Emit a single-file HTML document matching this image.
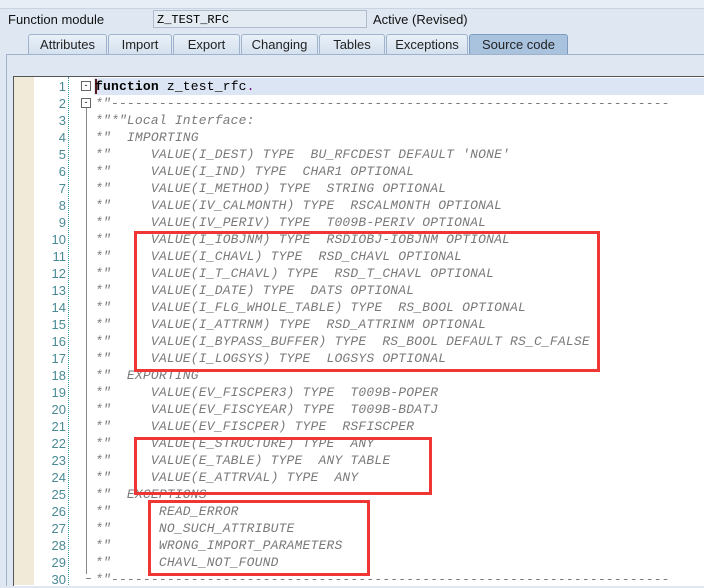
<!DOCTYPE html>
<html><head><style>
body{margin:0;width:704px;height:585px;overflow:hidden;background:#dfe8f2;font-family:"Liberation Sans",sans-serif;position:relative}
.a{position:absolute}
.tab{position:absolute;top:34px;height:20px;background:linear-gradient(#e9f0f8,#d3e0ee);border:1px solid #9fb4cc;border-bottom:none;font-size:13px;line-height:20px;text-align:center;color:#222;border-radius:3px 3px 0 0}
.code{position:absolute;left:95px;font-family:"Liberation Mono",monospace;font-size:13px;letter-spacing:0.18px;white-space:pre;color:#7a7a7a;font-style:italic;line-height:17px}
.num{position:absolute;left:34px;width:32px;text-align:right;font-family:"Liberation Sans",sans-serif;font-size:13px;color:#4a8a95;line-height:17px}
.box{position:absolute;border:3px solid #f03535}
</style></head><body>
<div class="a" style="left:0;top:0;width:704px;height:8px;background:#e8eef6;border-bottom:1px solid #c8d4e2"></div>
<div class="a" style="left:8px;top:12px;font-size:13px;color:#111">Function module</div>
<div class="a" style="left:153px;top:10px;width:214px;height:18px;background:#e4ebf2;border:1px solid #b0bccb;font-family:'Liberation Mono',monospace;font-size:12px;line-height:18px;padding-left:3px;box-sizing:border-box">Z_TEST_RFC</div>
<div class="a" style="left:373px;top:12px;font-size:13px;color:#111">Active (Revised)</div>
<div class="tab" style="left:28px;width:77px">Attributes</div>
<div class="tab" style="left:108px;width:62px">Import</div>
<div class="tab" style="left:173px;width:65px">Export</div>
<div class="tab" style="left:241px;width:75px">Changing</div>
<div class="tab" style="left:319px;width:64px">Tables</div>
<div class="tab" style="left:386px;width:80px">Exceptions</div>
<div class="tab" style="left:469px;width:97px;background:#a9c3df;border-color:#7f9cbf">Source code</div>
<div class="a" style="left:6px;top:54px;width:698px;height:531px;background:#dfe8f2;border-left:1px solid #9fb4cc;border-top:1px solid #9fb4cc"></div>
<div class="a" style="left:13px;top:76px;width:691px;height:509px;background:#fff;border-left:1px solid #555;border-top:1px solid #555"></div>
<div class="a" style="left:14px;top:77px;width:20px;height:508px;background:#f1ead8"></div>
<div class="a" style="left:68px;top:77px;height:508px;border-left:1px dotted #3a9aa0"></div>
<div class="a" style="left:94px;top:78px;width:610px;height:17px;background:#dbe5f3"></div>
<div class="a" style="left:95px;top:79px;width:2px;height:15px;background:#5a1a1a"></div>
<div class="a" style="left:86px;top:104px;height:470px;border-left:1px solid #888"></div>
<div class="a" style="left:81px;top:81px;width:8px;height:8px;border:1px solid #666;background:#fff;font-size:9px;line-height:7px;text-align:center">-</div>
<div class="a" style="left:81px;top:98px;width:8px;height:8px;border:1px solid #666;background:#fff;font-size:9px;line-height:7px;text-align:center">-</div>
<div class="a" style="left:86px;top:578px;width:5px;border-top:1px solid #888"></div>
<div id="n"></div><div id="c"></div>
<div class="box" style="left:134px;top:231px;width:460px;height:135px"></div>
<div class="box" style="left:134px;top:437px;width:292px;height:52px"></div>
<div class="box" style="left:148px;top:500px;width:216px;height:70px"></div>
<script>
var L=['function z_test_rfc.','*"'+'-'.repeat(70),'*"*"Local Interface:','*"  IMPORTING',
'*"     VALUE(I_DEST) TYPE  BU_RFCDEST DEFAULT \'NONE\'','*"     VALUE(I_IND) TYPE  CHAR1 OPTIONAL','*"     VALUE(I_METHOD) TYPE  STRING OPTIONAL','*"     VALUE(IV_CALMONTH) TYPE  RSCALMONTH OPTIONAL','*"     VALUE(IV_PERIV) TYPE  T009B-PERIV OPTIONAL',
'*"     VALUE(I_IOBJNM) TYPE  RSDIOBJ-IOBJNM OPTIONAL','*"     VALUE(I_CHAVL) TYPE  RSD_CHAVL OPTIONAL','*"     VALUE(I_T_CHAVL) TYPE  RSD_T_CHAVL OPTIONAL','*"     VALUE(I_DATE) TYPE  DATS OPTIONAL','*"     VALUE(I_FLG_WHOLE_TABLE) TYPE  RS_BOOL OPTIONAL','*"     VALUE(I_ATTRNM) TYPE  RSD_ATTRINM OPTIONAL','*"     VALUE(I_BYPASS_BUFFER) TYPE  RS_BOOL DEFAULT RS_C_FALSE','*"     VALUE(I_LOGSYS) TYPE  LOGSYS OPTIONAL',
'*"  EXPORTING','*"     VALUE(EV_FISCPER3) TYPE  T009B-POPER','*"     VALUE(EV_FISCYEAR) TYPE  T009B-BDATJ','*"     VALUE(EV_FISCPER) TYPE  RSFISCPER','*"     VALUE(E_STRUCTURE) TYPE  ANY','*"     VALUE(E_TABLE) TYPE  ANY TABLE','*"     VALUE(E_ATTRVAL) TYPE  ANY',
'*"  EXCEPTIONS','*"      READ_ERROR','*"      NO_SUCH_ATTRIBUTE','*"      WRONG_IMPORT_PARAMETERS','*"      CHAVL_NOT_FOUND','*"'+'-'.repeat(70)];
var h='',g='';
L.forEach(function(s,i){var t=78+17*i;
g+='<div class="num" style="top:'+t+'px">'+(i+1)+'</div>';
var st=i==0?'font-style:normal;color:#000;':'';
var txt=s.replace(/&/g,'&amp;').replace(/</g,'&lt;');
if(i==0)txt='<b>function</b> z_test_rfc<span style="color:#800080">.</span>';
h+='<div class="code" style="top:'+t+'px;'+st+'">'+txt+'</div>';});
document.getElementById('n').outerHTML=g;document.getElementById('c').outerHTML=h;
</script>
</body></html>
